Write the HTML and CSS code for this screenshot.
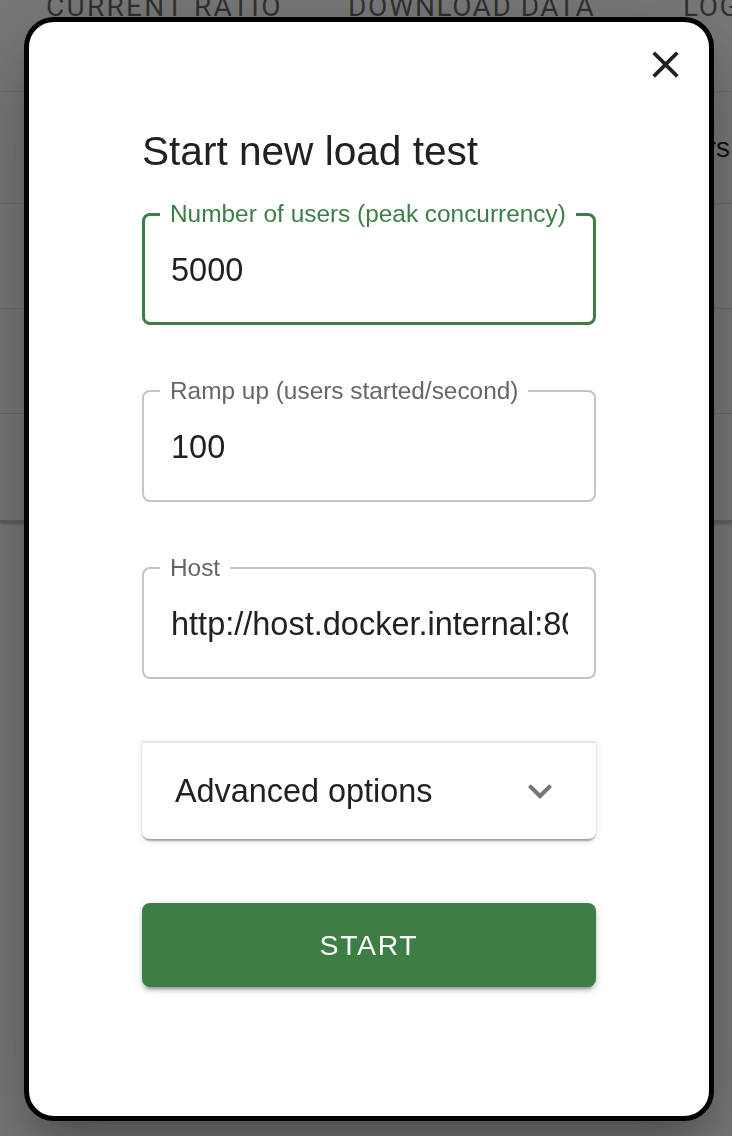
FILE: index.html
```
<!DOCTYPE html>
<html lang="en">
<head>
<meta charset="utf-8">
<title>Start new load test</title>
<link rel="stylesheet" href="styles.css">
</head>
<body>
<div class="app">
  <nav class="tabs">
    <span class="tab tab--ratio">CURRENT RATIO</span>
    <span class="tab tab--download">DOWNLOAD DATA</span>
    <span class="tab">LOGS</span>
  </nav>
  <div class="stats">
    <div class="stats-row stats-head">
      <span class="stats-cell">Users</span>
    </div>
    <div class="stats-row"></div>
    <div class="stats-row"></div>
    <div class="stats-row stats-row--last"></div>
  </div>
</div>

<div class="backdrop">
  <div class="dialog" role="dialog" aria-labelledby="dlg-title">
    <div class="dialog-head">
      <button class="close-btn" type="button" aria-label="Close">
        <svg viewBox="0 0 24 24" width="45" height="45" aria-hidden="true"><path d="M19 6.41 17.59 5 12 10.59 6.41 5 5 6.41 10.59 12 5 17.59 6.41 19 12 13.41 17.59 19 19 17.59 13.41 12z" fill="currentColor"/></svg>
      </button>
    </div>
    <form class="dialog-body">
      <h2 class="dialog-title" id="dlg-title">Start new load test</h2>

      <fieldset class="field field--focused">
        <legend class="field-label">Number of users (peak concurrency)</legend>
        <input class="field-input" type="text" value="5000">
      </fieldset>

      <fieldset class="field">
        <legend class="field-label">Ramp up (users started/second)</legend>
        <input class="field-input" type="text" value="100">
      </fieldset>

      <fieldset class="field">
        <legend class="field-label">Host</legend>
        <input class="field-input" type="text" value="http://host.docker.internal:8089">
      </fieldset>

      <div class="accordion">
        <button class="accordion-summary" type="button">
          <span>Advanced options</span>
          <svg class="accordion-icon" viewBox="0 0 24 24" width="48" height="48" aria-hidden="true"><path d="M16.59 8.59 12 13.17 7.41 8.59 6 10l6 6 6-6z" fill="currentColor"/></svg>
        </button>
      </div>

      <button class="start-btn" type="submit">START</button>
    </form>
  </div>
</div>
</body>
</html>
```

FILE: styles.css
```
html, body {
  margin: 0;
  padding: 0;
}

body {
  width: 732px;
  height: 1136px;
  overflow: hidden;
  background: #ffffff;
  font-family: "Liberation Sans", Arial, sans-serif;
  color: #212121;
}

/* ---------- page behind the dialog ---------- */
.app {
  display: flex;
  flex-direction: column;
}

.tabs {
  display: flex;
  align-items: flex-start;
  height: 99px;
  margin-top: -7px;
  padding-left: 46px;
  box-sizing: border-box;
  border-bottom: 1px solid #e0e0e0;
  font-family: Roboto, "Liberation Sans", sans-serif;
  font-size: 28px;
  line-height: 28px;
  letter-spacing: 1.5px;
  color: rgba(0, 0, 0, 0.6);
}

.tab {
  flex: none;
  white-space: nowrap;
}

.tab--ratio {
  width: 302px;
  letter-spacing: 2.3px;
}

.tab--download {
  width: 335px;
}

.stats {
  display: flex;
  flex-direction: column;
  border-bottom: 2px solid #c8c8c8;
  box-shadow: 0 2px 3px rgba(0, 0, 0, 0.25);
}

.stats-row {
  display: flex;
  align-items: center;
  height: 105px;
  box-sizing: border-box;
  border-bottom: 1px solid #e0e0e0;
}

.stats-row--last {
  height: 106px;
  border-bottom: 0;
}

.stats-head {
  height: 112px;
  justify-content: flex-end;
  padding-right: 2px;
  font-size: 28px;
  color: rgba(0, 0, 0, 0.87);
}

.stats-cell {
  white-space: nowrap;
}

/* ---------- dialog ---------- */
.backdrop {
  position: fixed;
  inset: 0;
  display: flex;
  padding: 17px 18px 15px 24px;
  background: rgba(0, 0, 0, 0.53);
}

.dialog {
  flex: 1;
  min-width: 0;
  display: flex;
  flex-direction: column;
  box-sizing: border-box;
  border: 5px solid #000000;
  border-radius: 30px;
  background: #ffffff;
  box-shadow:
    0 22px 30px -14px rgba(0, 0, 0, 0.2),
    0 48px 76px 6px rgba(0, 0, 0, 0.14),
    0 18px 92px 16px rgba(0, 0, 0, 0.12);
}

.dialog-head {
  display: flex;
  justify-content: flex-end;
  padding: 20px 21px 0 0;
}

.close-btn {
  display: flex;
  width: 45px;
  height: 45px;
  padding: 0;
  border: 0;
  background: none;
  color: #212121;
  cursor: pointer;
}

.dialog-body {
  display: flex;
  flex-direction: column;
  min-width: 0;
  padding: 0 113px;
  margin: 0;
}

.dialog-title {
  margin: 32px 0 0;
  font-size: 40.6px;
  line-height: 64px;
  font-weight: 400;
  color: #212121;
}

/* ---------- outlined text fields ---------- */
.field {
  margin: 54px 0 0;
  min-width: 0;
  padding: 0 26px;
  border: 2px solid #c4c4c4;
  border-radius: 8px;
}

.dialog-title + .field {
  margin-top: 19px;
}

.field-label {
  margin-left: -10px;
  padding: 0 10px;
  font-size: 24.4px;
  line-height: 24px;
  color: #666666;
  white-space: nowrap;
}

.field-input {
  display: block;
  width: 100%;
  min-width: 0;
  height: 64px;
  margin: 12px 0 21px;
  padding: 0 0 0 1px;
  box-sizing: border-box;
  border: 0;
  outline: none;
  background: transparent;
  font-family: inherit;
  font-size: 32.5px;
  color: #212121;
}

.field--focused {
  padding: 0 25px;
  border: 3px solid #3d7e45;
}

.field--focused .field-label {
  color: #3d7e45;
}

.field--focused .field-input {
  margin-bottom: 20px;
}

/* ---------- accordion ---------- */
.accordion {
  margin-top: 62px;
  border-top: 2px solid #e6e6e6;
  border-radius: 0 0 8px 8px;
  background: #ffffff;
  box-shadow:
    0 4px 2px -2px rgba(0, 0, 0, 0.2),
    0 2px 2px 0 rgba(0, 0, 0, 0.14),
    0 2px 6px 0 rgba(0, 0, 0, 0.12);
}

.accordion-summary {
  display: flex;
  align-items: center;
  justify-content: space-between;
  width: 100%;
  min-height: 96px;
  padding: 0 32px 0 33px;
  border: 0;
  background: none;
  font-family: inherit;
  font-size: 32.4px;
  color: #212121;
  cursor: pointer;
  text-align: left;
}

.accordion-icon {
  flex: none;
  color: #757575;
}

/* ---------- start button ---------- */
.start-btn {
  margin-top: 64px;
  height: 84px;
  border: 0;
  border-radius: 8px;
  background: #3d7e45;
  color: #ffffff;
  font-family: inherit;
  font-size: 28.5px;
  letter-spacing: 1.6px;
  cursor: pointer;
  box-shadow:
    0 6px 2px -4px rgba(0, 0, 0, 0.2),
    0 4px 4px 0 rgba(0, 0, 0, 0.14),
    0 2px 10px 0 rgba(0, 0, 0, 0.12);
}
```
